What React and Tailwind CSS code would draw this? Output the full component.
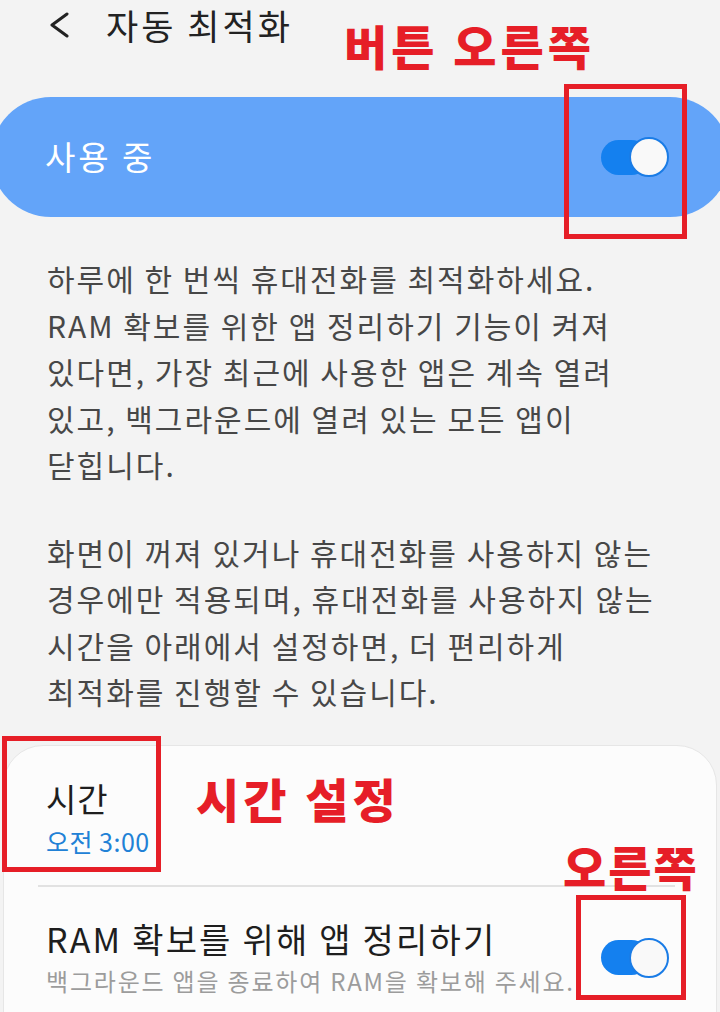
import React from 'react';

function Toggle() {
  return (
    <div className="flex items-center w-[68px] h-[40px]">
      <div className="w-[48px] h-[35px] rounded-full bg-[#1480ef]" />
      <div className="-ml-[20px] w-[40px] h-[40px] rounded-full bg-[#f9f9f9] border-2 border-[#1a7ce6]" />
    </div>
  );
}

const intro = [
  '하루에 한 번씩 휴대전화를 최적화하세요.',
  'RAM 확보를 위한 앱 정리하기 기능이 켜져',
  '있다면, 가장 최근에 사용한 앱은 계속 열려',
  '있고, 백그라운드에 열려 있는 모든 앱이',
  '닫힙니다.',
];

const detail = [
  '화면이 꺼져 있거나 휴대전화를 사용하지 않는',
  '경우에만 적용되며, 휴대전화를 사용하지 않는',
  '시간을 아래에서 설정하면, 더 편리하게',
  '최적화를 진행할 수 있습니다.',
];

export default function App() {
  return (
    <div className="relative w-[720px] h-[1012px] overflow-hidden bg-[#f3f3f3] font-['Noto_Sans_CJK_KR','Noto_Sans',sans-serif]">
      {/* Header */}
      <div className="h-[50px] flex items-center">
        <svg className="ml-[48px] w-[24px] h-[26px]" viewBox="0 0 24 26" fill="none" stroke="#222" strokeWidth="3" strokeLinecap="round" strokeLinejoin="round">
          <polyline points="19,2 4,13 19,24" />
        </svg>
        <h1 className="ml-[34px] text-[35px] leading-[50px] tracking-[3px] text-[#222]">자동 최적화</h1>
      </div>

      {/* Master switch */}
      <div className="mt-[47px] -ml-[9px] w-[739px] h-[120px] rounded-full bg-[#63a4f9] flex items-center justify-between pl-[54px] pr-[61px]">
        <span className="text-[33px] tracking-[3px] text-white">사용 중</span>
        <Toggle />
      </div>

      {/* Description */}
      <div className="mt-[38px] pl-[47px] text-[30px] leading-[46.5px] tracking-[2px] text-[#474747] whitespace-nowrap">
        {intro.map((line) => (
          <div key={line}>{line}</div>
        ))}
      </div>
      <div className="mt-[41px] pl-[47px] text-[30px] leading-[46.5px] tracking-[2px] text-[#474747] whitespace-nowrap">
        {detail.map((line) => (
          <div key={line}>{line}</div>
        ))}
      </div>

      {/* Settings card */}
      <div className="mt-[30px] mx-[3px] h-[300px] rounded-t-[40px] bg-[#fcfcfc] border border-[#e6e6e6]">
        <div className="pl-[42px] pt-[32px]">
          <div className="text-[33px] leading-[40px] tracking-[1px] text-[#1e1e1e]">시간</div>
          <div className="mt-[8px] text-[25px] leading-[30px] tracking-[0.5px] text-[#2181d6]">오전 3:00</div>
        </div>
        <div className="mt-[29px] ml-[34px] w-[637px] h-[2px] bg-[#e2e2e2]" />
        <div className="mt-[32px] pl-[42px] pr-[47px] flex items-center">
          <div className="whitespace-nowrap">
            <div className="text-[34px] leading-[40px] tracking-[2.2px] text-[#1e1e1e]">RAM 확보를 위해 앱 정리하기</div>
            <div className="mt-[6px] text-[24px] leading-[32px] tracking-[1.8px] text-[#9c9c9c]">백그라운드 앱을 종료하여 RAM을 확보해 주세요.</div>
          </div>
          <div className="ml-auto">
            <Toggle />
          </div>
        </div>
      </div>

      {/* Red annotations */}
      <div className="absolute left-[344px] top-[21px] text-[47px] leading-none font-black tracking-[4px] text-[#e61e27] whitespace-nowrap">버튼 오른쪽</div>
      <div className="absolute left-[564px] top-[84px] w-[123px] h-[155px] border-[5px] border-[#e61e27]" />
      <div className="absolute left-[2px] top-[736px] w-[159px] h-[136px] border-[5px] border-[#e61e27]" />
      <div className="absolute left-[196px] top-[774px] text-[47px] leading-none font-black tracking-[4px] text-[#e61e27] whitespace-nowrap">시간 설정</div>
      <div className="absolute left-[563px] top-[842px] text-[47px] leading-none font-black tracking-[2px] text-[#e61e27] whitespace-nowrap">오른쪽</div>
      <div className="absolute left-[576px] top-[895px] w-[110px] h-[105px] border-[5px] border-[#e61e27]" />
    </div>
  );
}
